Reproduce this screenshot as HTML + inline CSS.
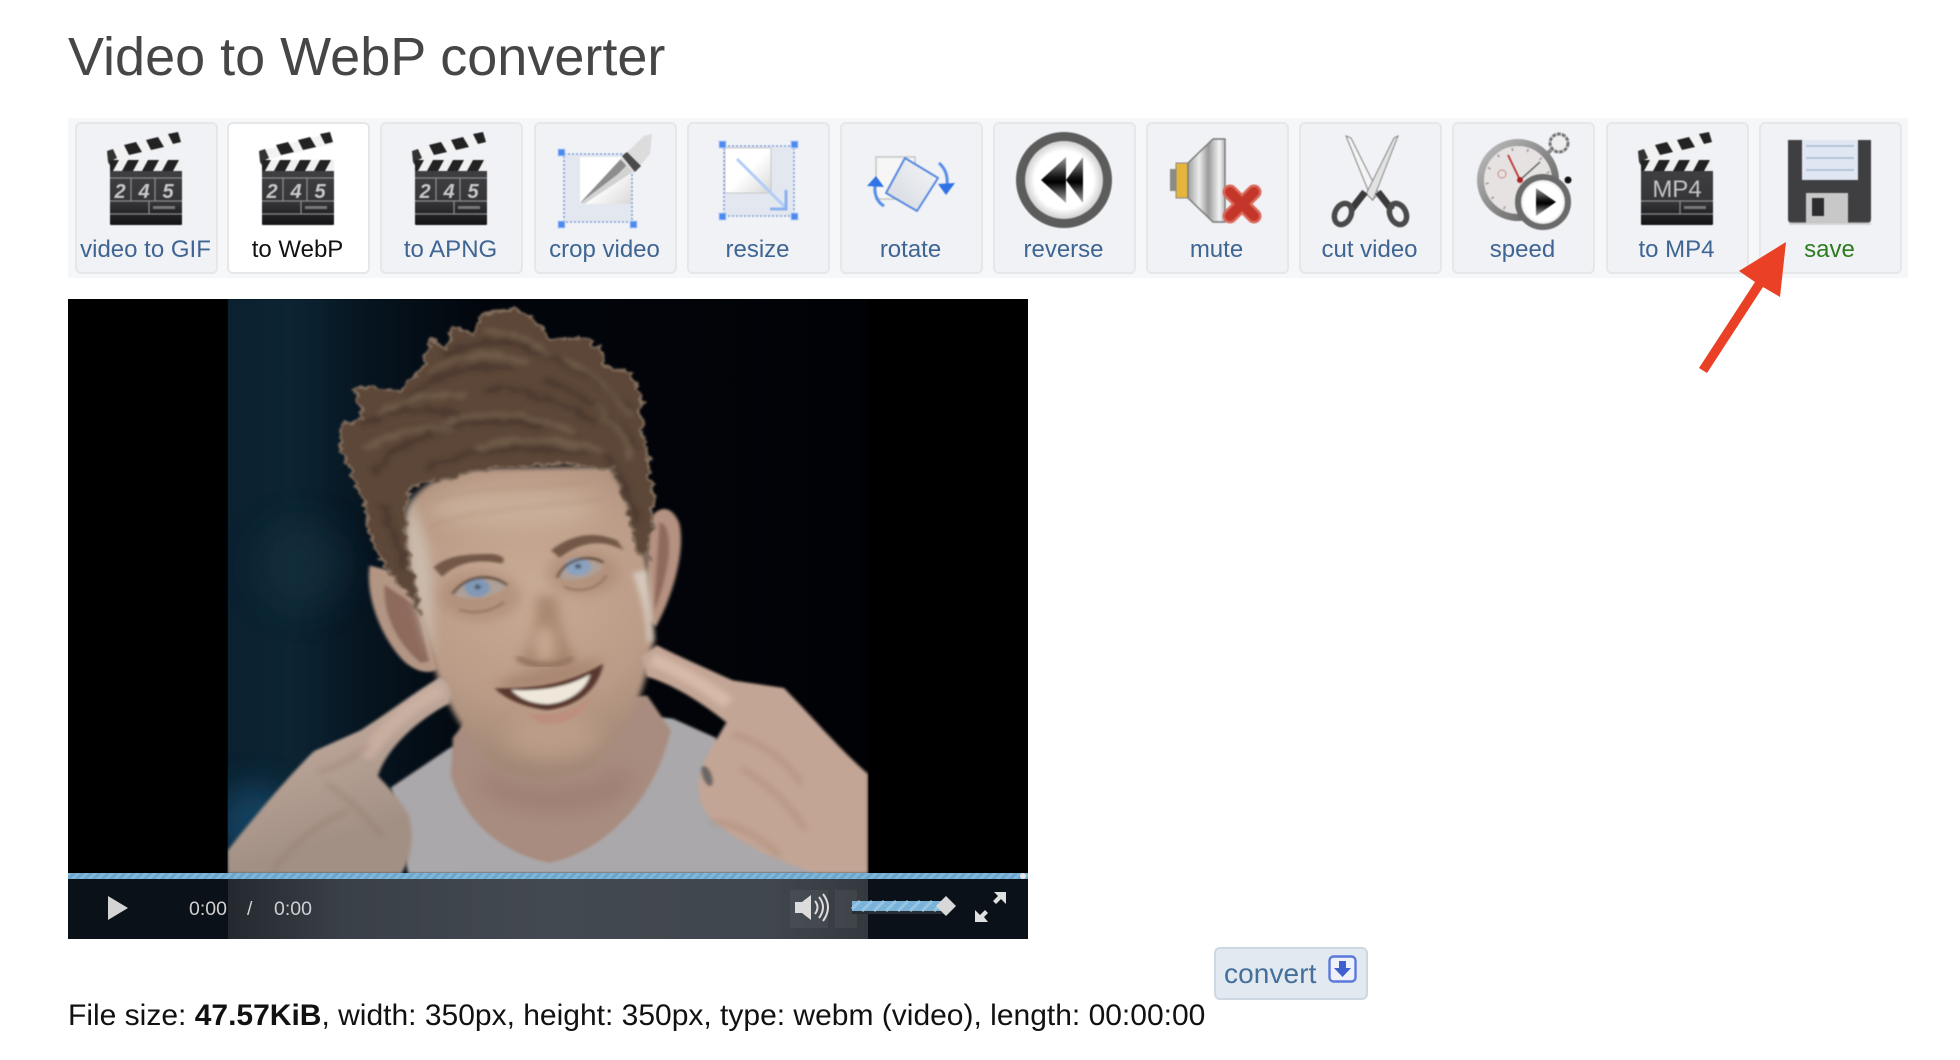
<!DOCTYPE html>
<html><head><meta charset="utf-8"><title>Video to WebP converter</title>
<style>
html,body{margin:0;padding:0;background:#fff;width:1960px;height:1060px;overflow:hidden;font-family:"Liberation Sans",Arial,sans-serif}
h1{position:absolute;left:68px;top:25px;margin:0;font-size:54px;line-height:64px;font-weight:400;color:#464646;white-space:nowrap}
#bar{position:absolute;left:68px;top:118px;width:1840px;height:160px;background:#f6f7f8}
.b{position:absolute;top:122px;width:143px;height:152px;box-sizing:border-box;border:2px solid #e5e7e9;border-radius:6px;background:#f0f2f5}
.b.on{background:#fff}
.b span{position:absolute;left:-5px;right:-3px;top:112px;line-height:28px;font-size:24px;text-align:center;color:#3f6593;white-space:nowrap}
.b.on span{color:#111}
.b.sv span{color:#2d7d1f}
.b svg{position:absolute;left:-2px;top:-2px;width:143px;height:152px;overflow:visible;filter:blur(.5px)}
#vid{position:absolute;left:68px;top:299px;width:960px;height:640px;background:#000;overflow:hidden}
#face{position:absolute;left:220px;top:290px;width:670px;height:600px}
#c1{position:absolute;left:68px;top:879px;width:960px;height:60px;background:#0a1118}
#c2{position:absolute;left:228px;top:879px;width:640px;height:60px;background:linear-gradient(90deg,#23292f 0,#3a4047 18%,#434950 50%,#40464d 85%,#34393f 100%)}
#pb{position:absolute;left:68px;top:873px;width:960px;height:6px;background:repeating-linear-gradient(135deg,#7fb6d9 0 3px,#6ca6cc 3px 6px)}
.t{position:absolute;top:897px;font-size:19.5px;line-height:24px;color:#d0d0d0;white-space:nowrap}
#cv{position:absolute;left:1214px;top:947px;width:154px;height:53px;box-sizing:border-box;border:2px solid #cdd8e2;border-radius:6px;background:#e2e9f1}
#cv span{position:absolute;left:8px;top:9px;font-size:28px;line-height:32px;color:#436f9a;white-space:nowrap;letter-spacing:.1px}
#fi{position:absolute;left:68px;top:998px;font-size:30px;line-height:36px;color:#111;white-space:nowrap}
</style></head><body>
<svg width="0" height="0" style="position:absolute">
<defs>
<linearGradient id="gb" x1="0" y1="0" x2="0" y2="1"><stop offset="0" stop-color="#434346"/><stop offset=".65" stop-color="#353538"/><stop offset="1" stop-color="#131315"/></linearGradient>
<linearGradient id="gs" x1="0" y1="0" x2="1" y2="0"><stop offset="0" stop-color="#a0a0a0"/><stop offset=".3" stop-color="#ececec"/><stop offset=".55" stop-color="#9a9a9a"/><stop offset=".85" stop-color="#f4f4f4"/><stop offset="1" stop-color="#b4b4b4"/></linearGradient>
<linearGradient id="gp" x1="0" y1="0" x2="1" y2="1"><stop offset="0" stop-color="#fff"/><stop offset=".5" stop-color="#fff"/><stop offset="1" stop-color="#d8d8d8"/></linearGradient>
<linearGradient id="gr" x1="1" y1="0" x2="0" y2="1"><stop offset="0" stop-color="#f5f6f8"/><stop offset="1" stop-color="#d4d8e0"/></linearGradient>
<linearGradient id="gtri" x1="0" y1="0" x2="0" y2="1"><stop offset="0" stop-color="#999"/><stop offset=".45" stop-color="#111"/><stop offset=".55" stop-color="#000"/><stop offset="1" stop-color="#aaa"/></linearGradient>
<linearGradient id="gring" x1="0" y1="0" x2="1" y2="1"><stop offset="0" stop-color="#bdbdbd"/><stop offset=".5" stop-color="#8a8a8a"/><stop offset="1" stop-color="#5a5a5a"/></linearGradient>
<radialGradient id="gdisc"><stop offset="0" stop-color="#fff"/><stop offset=".75" stop-color="#fff"/><stop offset="1" stop-color="#cfcfcf"/></radialGradient>
<g id="clap">
<polygon points="32,29 103,11 106,22 38,38 34,40" fill="#f2f2f2"/>
<polygon points="32,29 38,27 42,36 38,38 36,45 33,40" fill="#333"/>
<polygon points="49,23 61,20 67,30 54,33" fill="#222"/>
<polygon points="71,18 83,15 89,25 76,28" fill="#222"/>
<polygon points="93,12 103,10 106,20 98,22" fill="#222"/>
<rect x="35" y="38" width="72" height="65" rx="1" fill="url(#gb)"/>
<rect x="35" y="38" width="72" height="11" fill="#f0f0f0"/>
<polygon points="35,38 44,38 38,49 35,49" fill="#222"/>
<polygon points="53,38 64,38 58,49 47,49" fill="#222"/>
<polygon points="73,38 84,38 78,49 67,49" fill="#222"/>
<polygon points="93,38 104,38 98,49 87,49" fill="#222"/>
<g stroke="#8a8a8e" stroke-width="1.3" fill="none">
<path d="M35 56H107M35 79H107M35 92H107M56 56V79M80 56V79M74 79V92"/>
</g>
<rect x="78" y="84" width="22" height="3" fill="#77777b"/>
</g>
<g id="clap2">
<polygon points="32,29 103,11 106,22 38,38 34,40" fill="#f2f2f2"/>
<polygon points="32,29 38,27 42,36 38,38 36,45 33,40" fill="#333"/>
<polygon points="49,23 61,20 67,30 54,33" fill="#222"/>
<polygon points="71,18 83,15 89,25 76,28" fill="#222"/>
<polygon points="93,12 103,10 106,20 98,22" fill="#222"/>
<rect x="35" y="38" width="72" height="65" rx="1" fill="url(#gb)"/>
<rect x="35" y="38" width="72" height="11" fill="#f0f0f0"/>
<polygon points="35,38 44,38 38,49 35,49" fill="#222"/>
<polygon points="53,38 64,38 58,49 47,49" fill="#222"/>
<polygon points="73,38 84,38 78,49 67,49" fill="#222"/>
<polygon points="93,38 104,38 98,49 87,49" fill="#222"/>
<g stroke="#8a8a8e" stroke-width="1.3" fill="none"><path d="M35 79H107M35 92H107M74 79V92"/></g>
<rect x="78" y="84" width="22" height="3" fill="#77777b"/>
</g>
</defs></svg>

<h1>Video to WebP converter</h1>
<div id="bar"></div>

<div class="b" style="left:75px"><svg viewBox="0 0 143 152"><use href="#clap"/><g font-family="Liberation Sans" font-size="20" font-weight="700" font-style="italic" fill="#c8c8c8" text-anchor="middle"><text x="45" y="76">2</text><text x="69" y="76">4</text><text x="93" y="76">5</text></g></svg><span>video to GIF</span></div>
<div class="b on" style="left:227px"><svg viewBox="0 0 143 152"><use href="#clap"/><g font-family="Liberation Sans" font-size="20" font-weight="700" font-style="italic" fill="#c8c8c8" text-anchor="middle"><text x="45" y="76">2</text><text x="69" y="76">4</text><text x="93" y="76">5</text></g></svg><span>to WebP</span></div>
<div class="b" style="left:380px"><svg viewBox="0 0 143 152"><use href="#clap"/><g font-family="Liberation Sans" font-size="20" font-weight="700" font-style="italic" fill="#c8c8c8" text-anchor="middle"><text x="45" y="76">2</text><text x="69" y="76">4</text><text x="93" y="76">5</text></g></svg><span>to APNG</span></div>

<div class="b" style="left:534px"><svg viewBox="0 0 143 152">
<rect x="30" y="32" width="68" height="68" fill="#e2e7f0"/>
<rect x="46" y="35" width="51" height="47" fill="url(#gp)"/>
<rect x="30" y="32" width="68" height="68" fill="none" stroke="#7f9fd8" stroke-width="1.6" stroke-dasharray="2 2"/>
<polygon points="46,81 90,33 103,47 50,82" fill="#d2d2d2"/>
<polygon points="46,81 84,52 92,44 88,36" fill="#8d8d8d"/>
<polygon points="86,37 110,14 118,12 116,32 100,51" fill="#dcdcdc"/>
<polygon points="88,34 93,30 107,44 101,50" fill="#4a4a4a"/>
<rect x="24" y="27" width="7" height="7" fill="#4d8af0" stroke="#bcd2f8"/><rect x="24" y="99" width="7" height="7" fill="#4d8af0" stroke="#bcd2f8"/><rect x="96" y="99" width="7" height="7" fill="#4d8af0" stroke="#bcd2f8"/>
</svg><span>crop video</span></div>

<div class="b" style="left:687px"><svg viewBox="0 0 143 152">
<rect x="37" y="24" width="70" height="70" fill="#e2e7f0"/>
<rect x="38" y="26" width="46" height="45" fill="url(#gp)" stroke="#c8c8c8"/>
<rect x="37" y="24" width="70" height="70" fill="none" stroke="#7f9fd8" stroke-width="1.6" stroke-dasharray="2 2"/>
<path d="M50 37L98 85" stroke="#b2cdf5" stroke-width="3"/>
<path d="M99 68V87H83" stroke="#8db2ee" stroke-width="3" fill="none"/>
<rect x="32" y="19" width="7" height="7" fill="#4d8af0" stroke="#bcd2f8"/><rect x="104" y="19" width="7" height="7" fill="#4d8af0" stroke="#bcd2f8"/><rect x="32" y="91" width="7" height="7" fill="#4d8af0" stroke="#bcd2f8"/><rect x="104" y="91" width="7" height="7" fill="#4d8af0" stroke="#bcd2f8"/>
</svg><span>resize</span></div>

<div class="b" style="left:840px"><svg viewBox="0 0 143 152">
<rect x="36" y="35" width="39" height="42" fill="#f6f6f6" stroke="#c6c6c6" stroke-width="1.5"/>
<polygon points="65,36 98,56 77,89 46,71" fill="url(#gr)" stroke="#5a8ae0" stroke-width="2" stroke-linejoin="round"/>
<path d="M99 41C106 47 108 55 107 64" stroke="#5a8fea" stroke-width="3" fill="none"/>
<polygon points="98,62 115,61 106,73" fill="#2f72e6"/>
<path d="M44 84C37 80 34 72 35 63" stroke="#5a8fea" stroke-width="3" fill="none"/>
<polygon points="27,64 44,65 36,54" fill="#2f72e6"/>
</svg><span>rotate</span></div>

<div class="b" style="left:993px"><svg viewBox="0 0 143 152">
<circle cx="71" cy="58" r="48" fill="#5c5c5c"/>
<circle cx="71" cy="58" r="39" fill="url(#gdisc)"/>
<polygon points="48,58 73,35 73,81" fill="url(#gtri)"/>
<polygon points="73,58 90,35 90,81" fill="url(#gtri)"/>
</svg><span>reverse</span></div>

<div class="b" style="left:1146px"><svg viewBox="0 0 143 152">
<rect x="24" y="47" width="7" height="22" fill="#8a8a8a"/>
<rect x="30" y="41" width="13" height="35" fill="#e6b53c" stroke="#888" stroke-width="1"/>
<polygon points="42,41 67,17 79,17 79,100 67,100 42,76" fill="url(#gs)" stroke="#777" stroke-width="1.4" stroke-linejoin="round"/>
<path d="M84 70L108 94M108 70L84 94" stroke="#d96a5c" stroke-width="15" stroke-linecap="round"/>
<path d="M84 70L108 94M108 70L84 94" stroke="#c5362a" stroke-width="10" stroke-linecap="round"/>
</svg><span>mute</span></div>

<div class="b" style="left:1299px"><svg viewBox="0 0 143 152">
<polygon points="47,14 52,16 80,72 73,78" fill="#f4f4f4" stroke="#888" stroke-width="1"/>
<polygon points="99,14 95,16 67,72 74,78" fill="#e2e2e2" stroke="#888" stroke-width="1"/>
<path d="M79 70L93 88M66 70L52 88" stroke="#3a3a3a" stroke-width="7"/>
<ellipse cx="99" cy="92" rx="8" ry="11" fill="none" stroke="#4a4a4a" stroke-width="5.500" transform="rotate(-25 99 92)"/>
<ellipse cx="44" cy="92" rx="8" ry="11" fill="none" stroke="#4a4a4a" stroke-width="5.500" transform="rotate(25 44 92)"/>
</svg><span>cut video</span></div>

<div class="b" style="left:1452px"><svg viewBox="0 0 143 152">
<path d="M99 28L93 34" stroke="#888" stroke-width="4"/>
<circle cx="107" cy="21" r="9" fill="#eee" stroke="#777" stroke-width="3" stroke-dasharray="4 1"/>
<circle cx="116" cy="58" r="3.500" fill="#111"/>
<circle cx="66" cy="58" r="37.500" fill="#e6e2e2" stroke="url(#gring)" stroke-width="7"/>
<circle cx="66" cy="58" r="31" fill="none" stroke="#999" stroke-width="3" stroke-dasharray="1.500 14"/>
<circle cx="50" cy="52" r="4" fill="none" stroke="#c88" stroke-width="1"/>
<path d="M56 33L68 58" stroke="#b33" stroke-width="1.800"/>
<path d="M68 58L88 40" stroke="#666" stroke-width="1.500"/>
<circle cx="68" cy="58" r="3" fill="#a22"/>
<circle cx="91" cy="80" r="25" fill="url(#gdisc)" stroke="#6a6a6a" stroke-width="6"/>
<polygon points="84,66 84,94 104,80" fill="url(#gtri)"/>
</svg><span>speed</span></div>

<div class="b" style="left:1606px"><svg viewBox="0 0 143 152"><use href="#clap2"/><text x="71" y="75" font-family="Liberation Sans" font-size="24" fill="#c4c4c4" text-anchor="middle">MP4</text></svg><span>to MP4</span></div>

<div class="b sv" style="left:1759px"><svg viewBox="0 0 143 152">
<path d="M29 18H112V97Q112 101 108 101H33Q29 101 29 97Z" fill="#3f3f42"/>
<rect x="43" y="18" width="56" height="40" fill="#e0e6f2"/>
<path d="M47 24H95M47 36H95M47 48H95" stroke="#a8b8d0" stroke-width="1.600"/>
<rect x="47" y="71" width="42" height="30" fill="#c8c8c8"/>
<rect x="53" y="76" width="12" height="18" fill="#2c2c2e"/>
<rect x="30" y="100" width="82" height="3" fill="#bbb" opacity=".5"/>
</svg><span>save</span></div>

<svg style="position:absolute;left:0;top:0" width="1960" height="500"><polygon points="1786,242 1739,271 1755,282 1699,368 1707,373 1763,287 1780,297" fill="#ea4025"/></svg>

<div id="vid"></div>
<svg id="face" viewBox="0 0 1568 1568" preserveAspectRatio="none">
<defs>
<linearGradient id="bg" x1="0" x2="1" y1="0" y2="0"><stop offset="0" stop-color="#0b2130"/><stop offset=".1" stop-color="#0c2433"/><stop offset=".22" stop-color="#06141f"/><stop offset=".4" stop-color="#02060c"/><stop offset="1" stop-color="#010206"/></linearGradient>
<radialGradient id="sk" gradientUnits="userSpaceOnUse" cx="730" cy="780" r="480"><stop offset="0" stop-color="#c8ab95"/><stop offset=".6" stop-color="#bb9c88"/><stop offset="1" stop-color="#a08674"/></radialGradient>
<linearGradient id="hl" gradientUnits="userSpaceOnUse" x1="400" y1="1400" x2="300" y2="1100"><stop offset="0" stop-color="#a39085"/><stop offset="1" stop-color="#bfa89b"/></linearGradient>
<clipPath id="cp"><rect x="18" y="24" width="1499" height="1501"/></clipPath>
<filter id="b3" x="-20%" y="-20%" width="140%" height="140%"><feGaussianBlur stdDeviation="3.500"/></filter>
<filter id="b6" x="-20%" y="-20%" width="140%" height="140%"><feGaussianBlur stdDeviation="7"/></filter>
<filter id="b12" x="-30%" y="-30%" width="160%" height="160%"><feGaussianBlur stdDeviation="14"/></filter>
<filter id="b25" x="-50%" y="-50%" width="200%" height="200%"><feGaussianBlur stdDeviation="26"/></filter>
<filter id="b40" x="-50%" y="-50%" width="200%" height="200%"><feGaussianBlur stdDeviation="40"/></filter>
<filter id="hr" x="-10%" y="-10%" width="120%" height="120%"><feTurbulence type="fractalNoise" baseFrequency=".025 .04" numOctaves="2" seed="7" result="n"/><feDisplacementMap in="SourceGraphic" in2="n" scale="28" xChannelSelector="R" yChannelSelector="G"/><feGaussianBlur stdDeviation="6"/></filter>
<filter id="he" x="-10%" y="-10%" width="120%" height="120%"><feTurbulence type="fractalNoise" baseFrequency=".03 .05" numOctaves="3" seed="7" result="n"/><feDisplacementMap in="SourceGraphic" in2="n" scale="30" xChannelSelector="R" yChannelSelector="G"/><feGaussianBlur stdDeviation="2.500"/></filter>
</defs>
<g clip-path="url(#cp)">
<rect x="18" y="24" width="1499" height="1501" fill="url(#bg)"/>
<ellipse cx="190" cy="720" rx="100" ry="120" fill="#16303f" filter="url(#b40)" opacity=".6"/>
<ellipse cx="80" cy="1400" rx="90" ry="110" fill="#164a6a" filter="url(#b40)" opacity=".8"/>

<g filter="url(#b3)">
<path d="M400 1300L540 1195L620 1180L1020 1115L1060 1120L1160 1170L1400 1525H440Z" fill="#aaa8aa"/>
<path d="M545 1170L540 1270C570 1380 650 1470 770 1497C900 1470 1020 1330 1055 1150L1000 1060L600 1090Z" fill="#a88c7f"/>
<path d="M350 720C340 790 370 900 430 970C460 1000 490 1005 510 990L470 830L420 740Z" fill="#b39583"/>
<path d="M385 770C380 840 410 920 470 975L490 970L465 830Z" fill="#8d6b5c"/>
<path d="M1000 610C1020 565 1055 555 1075 610C1090 680 1060 800 1020 880L1000 860Z" fill="#b49180"/>
<path d="M1028 610C1045 600 1055 650 1050 700C1040 770 1030 800 1015 840Z" fill="#8f6a5c"/>
</g>
<path d="M620 1250C680 1320 860 1330 950 1240L960 1300C880 1380 680 1380 610 1300Z" fill="#8f7063" filter="url(#b25)" opacity=".45"/>
<path d="M435 600C440 520 520 470 620 465L920 460C960 540 990 640 1000 720L1015 920C995 1050 960 1150 880 1235C830 1285 700 1295 640 1240C570 1170 520 1060 500 980C470 860 430 720 435 600Z" fill="url(#sk)" filter="url(#b6)"/>
<path d="M445 530C460 600 490 640 495 760L500 960L480 900C450 780 430 680 435 600Z" fill="#cdbfb0" filter="url(#b12)" opacity=".9"/>
<path d="M965 740C985 800 1000 860 1000 925L1015 915L1000 730Z" fill="#d8cdc1" filter="url(#b6)" opacity=".9"/>
<ellipse cx="680" cy="570" rx="200" ry="50" fill="#d4bfa9" filter="url(#b25)" opacity=".5"/>
<path d="M490 620C580 570 760 570 900 545M500 550C600 510 760 520 860 500" stroke="#a58873" stroke-width="8" fill="none" opacity=".35" filter="url(#b6)"/>
<!-- hair -->
<path d="M370 700C350 620 340 560 320 510C300 470 300 440 280 410L290 350L335 335L312 262L350 250L420 265L480 195L490 130L530 155L545 95L590 115L620 60L690 50L750 90L770 135L840 125L890 145L900 200L960 215L990 290L985 350L1000 430L1015 570L1000 700L975 690C965 620 945 540 925 470L800 455L600 470L445 520C430 570 430 640 445 720L470 850L440 800Z" fill="#5d4737" stroke="#84705e" stroke-width="6" filter="url(#he)"/>
<g filter="url(#hr)">
<path d="M330 360C420 300 470 300 560 330M420 300C500 220 600 180 690 210M520 170C600 130 690 120 760 170M720 160C820 190 900 240 960 310M620 260C700 250 800 290 880 350M420 420C520 340 640 330 760 360M480 470C560 420 700 400 860 430M760 240C840 260 930 330 975 420M360 480C390 430 420 400 470 380M900 430C940 480 960 540 975 610M380 560C400 610 420 680 430 730" stroke="#3f2f24" stroke-width="16" fill="none" opacity=".55"/>
<path d="M370 330C430 280 500 260 570 280M490 210C560 170 640 160 720 190M620 110C680 100 730 130 770 170M800 180C870 210 930 270 960 330M520 350C610 310 720 320 830 370M340 420C400 370 470 350 540 370M600 410C700 380 800 390 900 420M880 300C920 340 950 390 965 440" stroke="#86705a" stroke-width="14" fill="none" opacity=".45"/>
</g>
<ellipse cx="610" cy="800" rx="95" ry="65" fill="#a8856f" filter="url(#b12)" opacity=".55"/>
<ellipse cx="850" cy="740" rx="85" ry="60" fill="#a8856f" filter="url(#b12)" opacity=".55"/>
<g filter="url(#b3)">
<path d="M500 725C530 695 570 690 640 690C660 695 670 700 660 715C600 700 550 715 520 750Z" fill="#735946"/>
<path d="M775 680C815 645 870 625 930 655L945 680C885 645 835 665 795 700Z" fill="#735946"/>
<path d="M545 790C570 755 640 745 672 775C640 808 580 815 545 795Z" fill="#aea096"/>
<path d="M795 745C805 705 870 695 895 722C880 755 825 765 795 752Z" fill="#aea096"/>
<ellipse cx="602" cy="778" rx="30" ry="24" fill="#8198b6"/>
<ellipse cx="838" cy="723" rx="30" ry="23" fill="#8aa2c0"/>
<circle cx="603" cy="776" r="7" fill="#4a5466"/><circle cx="838" cy="722" r="7" fill="#4a5466"/>
<path d="M545 795C570 750 630 735 672 772" stroke="#5a4438" stroke-width="6" fill="none"/>
<path d="M790 752C805 705 860 688 897 712" stroke="#5a4438" stroke-width="6" fill="none"/>
<path d="M560 835C600 850 640 838 665 815M805 775C845 795 885 780 905 745" stroke="#836453" stroke-width="6" fill="none" opacity=".6"/>
</g>
<path d="M740 800C745 880 730 930 700 965C735 990 800 990 835 960C810 930 790 880 790 800Z" fill="#9e7a63" filter="url(#b12)" opacity=".7"/>
<ellipse cx="760" cy="925" rx="26" ry="48" fill="#d0b19b" filter="url(#b12)" opacity=".75"/>
<path d="M695 960C725 985 790 990 825 962" stroke="#7c5a48" stroke-width="9" fill="none" filter="url(#b6)"/>
<path d="M640 1035C690 990 800 985 900 960C880 1000 820 1030 760 1040C710 1045 670 1045 640 1035Z" fill="#a27f6b" filter="url(#b12)" opacity=".75"/>
<ellipse cx="780" cy="1170" rx="110" ry="60" fill="#c4a491" filter="url(#b25)" opacity=".6"/>
<g filter="url(#b3)">
<path d="M643 1041C720 1040 800 1040 897 976C885 1050 830 1090 765 1098C710 1090 670 1070 643 1041Z" fill="#59382e"/>
<path d="M682 1045C740 1050 815 1040 866 1004C858 1045 815 1078 770 1082C730 1082 700 1068 682 1045Z" fill="#efe8da"/>
<path d="M720 1103C770 1120 830 1100 868 1062C855 1115 795 1145 745 1132Z" fill="#bd8f7e"/>
</g>
<g filter="url(#b3)">
<path d="M515 1012C470 1040 400 1100 330 1150L220 1205C160 1270 70 1390 18 1465V1525H425C450 1480 455 1420 440 1370C420 1330 395 1300 370 1270C385 1210 450 1130 538 1080C545 1050 535 1025 515 1012Z" fill="url(#hl)"/>
<path d="M520 1045C450 1080 390 1140 340 1220" stroke="#d2b6a6" stroke-width="34" fill="none" opacity=".65" filter="url(#b6)"/>
<path d="M350 1190C300 1230 260 1250 230 1260M120 1525C170 1440 240 1390 300 1360M250 1290C300 1330 340 1370 380 1430" stroke="#8a6c5c" stroke-width="12" fill="none" opacity=".3" filter="url(#b6)"/>
<path d="M986 958L1022 928C1060 950 1130 985 1200 1020L1320 1040C1390 1120 1450 1200 1517 1265V1525H1400C1330 1500 1250 1470 1170 1400C1130 1370 1110 1320 1125 1260C1135 1220 1160 1180 1185 1130C1130 1080 1060 1030 998 1010Z" fill="#c3a595"/>
<path d="M1010 965C1070 990 1130 1030 1190 1080" stroke="#dcbfad" stroke-width="34" fill="none" opacity=".8" filter="url(#b6)"/>
<path d="M1150 1390C1200 1390 1270 1430 1310 1480M1200 1160C1260 1180 1320 1220 1360 1290M1220 1250C1280 1290 1330 1340 1370 1410" stroke="#96735f" stroke-width="12" fill="none" opacity=".3" filter="url(#b6)"/>
<ellipse cx="1140" cy="1270" rx="11" ry="28" fill="#6a6663" transform="rotate(-18 1140 1270)"/>
</g>
</g>
</svg>

<div id="c1"></div><div id="c2"></div><div id="pb"></div>
<svg style="position:absolute;left:0;top:0" width="1100" height="960">
<circle cx="1023" cy="876" r="3" fill="#e6e6e6"/>
<polygon points="108,896 128,908 108,920" fill="#d4d4d4"/>
<rect x="790" y="890" width="38" height="38" fill="#fff" opacity=".05"/><rect x="835" y="890" width="22" height="38" fill="#fff" opacity=".05"/>
<polygon points="795,902 802,902 811,895 811,920 802,913 795,913" fill="#dcdcdc"/>
<path d="M815 901Q820 907 815 914M819 897Q827 907 819 918M823 894Q833 907 823 921" stroke="#dcdcdc" stroke-width="2" fill="none"/>
<rect x="852" y="911" width="94" height="3" fill="#2a2f36"/>
<rect x="852" y="901" width="94" height="10" fill="#7ab3d9"/>
<path d="M860 901L852 909M872 901L862 911M884 901L874 911M896 901L886 911M908 901L898 911M920 901L910 911M932 901L922 911M944 901L934 911" stroke="#98c6e2" stroke-width="3"/>
<polygon points="946,896 956,906 946,916 936,906" fill="#d8d8d8"/>
<polygon points="1006,892 994,892 998,896 993,901 996,904 1001,899 1006,904" fill="#e0e0e0"/>
<polygon points="975,922 988,922 984,917 988,913 985,910 980,915 975,910" fill="#e0e0e0"/>
</svg>
<div class="t" style="left:189px">0:00</div><div class="t" style="left:247px">/</div><div class="t" style="left:274px">0:00</div>

<div id="cv"><span>convert</span></div>
<svg style="position:absolute;left:1328px;top:955px" width="29" height="29" viewBox="0 0 29 29"><rect x="1.500" y="1.500" width="26" height="25" rx="4" fill="#eef0fa" stroke="#5b78dc" stroke-width="2.400"/><path d="M11 6H18V13H23L14.500 22L6 13H11Z" fill="#3f5fcf"/></svg>
<div id="fi">File size: <b>47.57KiB</b>, width: 350px, height: 350px, type: webm (video), length: 00:00:00</div>
</body></html>
